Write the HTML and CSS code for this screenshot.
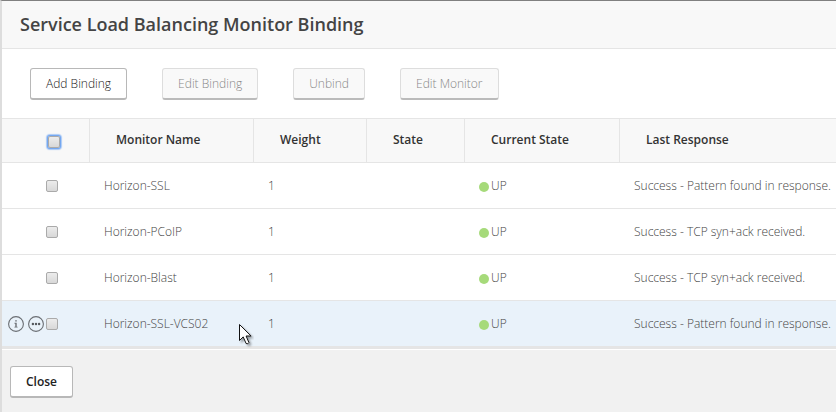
FILE: index.html
```html
<!DOCTYPE html>
<html lang="en">
<head>
<meta charset="UTF-8">
<title>Service Load Balancing Monitor Binding</title>
<link rel="stylesheet" href="styles.css">
</head>
<body>

<div class="panel">
  <header class="title">
    <h1>Service Load Balancing Monitor Binding</h1>
  </header>

  <!-- actions -->
  <div class="toolbar">
    <button class="btn" type="button">Add Binding</button>
    <button class="btn" type="button" disabled>Edit Binding</button>
    <button class="btn" type="button" disabled>Unbind</button>
    <button class="btn" type="button" disabled>Edit Monitor</button>
  </div>

  <!-- bindings -->
  <table class="grid">
    <colgroup>
      <col class="c-pick"><col class="c-name"><col class="c-weight"><col class="c-state"><col class="c-current"><col>
    </colgroup>
    <thead>
      <tr>
        <th class="pick"><div class="tools"><input class="check focused" type="checkbox" aria-label="Select all"></div></th>
        <th>Monitor Name</th>
        <th>Weight</th>
        <th>State</th>
        <th>Current State</th>
        <th>Last Response</th>
      </tr>
    </thead>
    <tbody>
      <tr>
        <td class="pick"><div class="tools"><input class="check" type="checkbox" aria-label="Select Horizon-SSL"></div></td>
        <td>Horizon-SSL</td>
        <td>1</td>
        <td></td>
        <td><span class="status">UP</span></td>
        <td>Success - Pattern found in response.</td>
      </tr>
      <tr>
        <td class="pick"><div class="tools"><input class="check" type="checkbox" aria-label="Select Horizon-PCoIP"></div></td>
        <td>Horizon-PCoIP</td>
        <td>1</td>
        <td></td>
        <td><span class="status">UP</span></td>
        <td>Success - TCP syn+ack received.</td>
      </tr>
      <tr>
        <td class="pick"><div class="tools"><input class="check" type="checkbox" aria-label="Select Horizon-Blast"></div></td>
        <td>Horizon-Blast</td>
        <td>1</td>
        <td></td>
        <td><span class="status">UP</span></td>
        <td>Success - TCP syn+ack received.</td>
      </tr>
      <tr class="hover">
        <td class="pick">
          <div class="tools">
            <button class="icon" type="button" aria-label="Details">
              <svg width="16" height="16" viewBox="0 0 16 16"><circle cx="8" cy="8" r="7.4" fill="none" stroke="#6a6e73" stroke-width="1.1"/><path d="M7.2 4.2h1.6v1.4H7.2zM6.5 6.8h2.2v3.9h.9v.9H6.4v-.9h.9V7.7h-.8z" fill="#6a6e73"/></svg>
            </button>
            <button class="icon" type="button" aria-label="More actions">
              <svg width="16" height="16" viewBox="0 0 16 16"><circle cx="8" cy="8" r="7.4" fill="none" stroke="#6a6e73" stroke-width="1.1"/><g fill="#55595e"><circle cx="4.9" cy="8" r="1.2"/><circle cx="8" cy="8" r="1.2"/><circle cx="11.1" cy="8" r="1.2"/></g></svg>
            </button>
            <input class="check" type="checkbox" aria-label="Select Horizon-SSL-VCS02">
          </div>
        </td>
        <td>Horizon-SSL-VCS02
          <svg class="cursor" width="18" height="24" viewBox="0 0 18 24"><path d="M.5.5v16l3.7-3.6 2.9 6.6q1.8 1 2.8-1L7.1 12h5z" fill="#fff" stroke="#111" stroke-width="1"/></svg>
        </td>
        <td>1</td>
        <td></td>
        <td><span class="status">UP</span></td>
        <td>Success - Pattern found in response.</td>
      </tr>
    </tbody>
  </table>

  <footer class="footer">
    <button class="btn strong" type="button">Close</button>
  </footer>
</div>

</body>
</html>
```
FILE: styles.css
```css
/* ===== global ===== */
*{box-sizing:border-box}
html,body{margin:0;height:100%}
body{background:#fff;color:#444;font:300 12px/16px "Open Sans","Noto Sans",sans-serif}

.panel{
  display:flex;flex-direction:column;min-height:100%;
  border-top:1px solid #808080;border-left:2px solid #ddd
}

/* ---------- title ---------- */
.title{padding:11px 18px 12px;background:#f8f8f8;border-bottom:1px solid #e5e5e5}
h1{margin:0;font-size:18px;line-height:24px;font-weight:600;color:#444}

/* ---------- buttons ---------- */
.toolbar{display:flex;flex-wrap:wrap;gap:35px;padding:19px 28px 18px}
.btn{
  height:32px;padding:0 15px;font:inherit;color:#222;background:#fff;
  border:1px solid #b8b8b8;border-bottom-width:2px;border-radius:3px
}
.btn:disabled{color:#888;background:#f9f9f9;border-color:#ddd;border-bottom-color:#bbb}
.btn.strong{font-weight:600}

/* ---------- table ---------- */
.grid{width:100%;table-layout:fixed;border-collapse:separate;border-spacing:0;border-top:1px solid #e5e5e5}
.c-pick{width:88px}
.c-name{width:164px}
.c-weight{width:113px}
.c-state{width:98px}
.c-current{width:155px}

th{
  height:44px;padding:0 0 2px 26px;text-align:left;font-weight:600;color:#333;
  background:#f8f8f8;border-bottom:1px solid #e5e5e5;border-right:1px solid #e5e5e5
}
th:last-child{border-right:0}
td{position:relative;height:46px;padding:0 0 0 14px;white-space:nowrap;border-bottom:1px solid #e5e5e5}
.hover td{background:#e9f2fa}
tbody tr:last-child td{height:48px;border-bottom-width:3px}

.grid .pick{padding:0}
.tools{display:flex;align-items:center;justify-content:flex-end;gap:4px;padding-right:32px}
th .tools{padding:3px 29px 0 0}
.tools .check{margin:0 0 0 -2px}

.check{
  appearance:none;width:12px;height:12px;
  border:1px solid #aaa;border-radius:2px;background:linear-gradient(#ececec,#d8d8d8)
}
.check.focused{box-shadow:0 0 0 1px #74a7f0,0 0 1px 2px #a9c9f6}
.icon{display:block;width:16px;height:16px;padding:0;border:0;background:none}
.icon svg{display:block}

.status{display:flex;align-items:center;gap:2px}
.status::before{content:"";width:10px;height:10px;margin-top:2px;border-radius:50%;background:#a6da7a}

.cursor{position:absolute;left:149px;top:23px;filter:drop-shadow(2px 2px 1px rgba(0,0,0,.35))}

/* ---------- footer ---------- */
.footer{flex:1;padding:16px 8px 14px;background:#f1f1f1;border-top:1px solid #fff;border-bottom:1px solid #ddd}
```
